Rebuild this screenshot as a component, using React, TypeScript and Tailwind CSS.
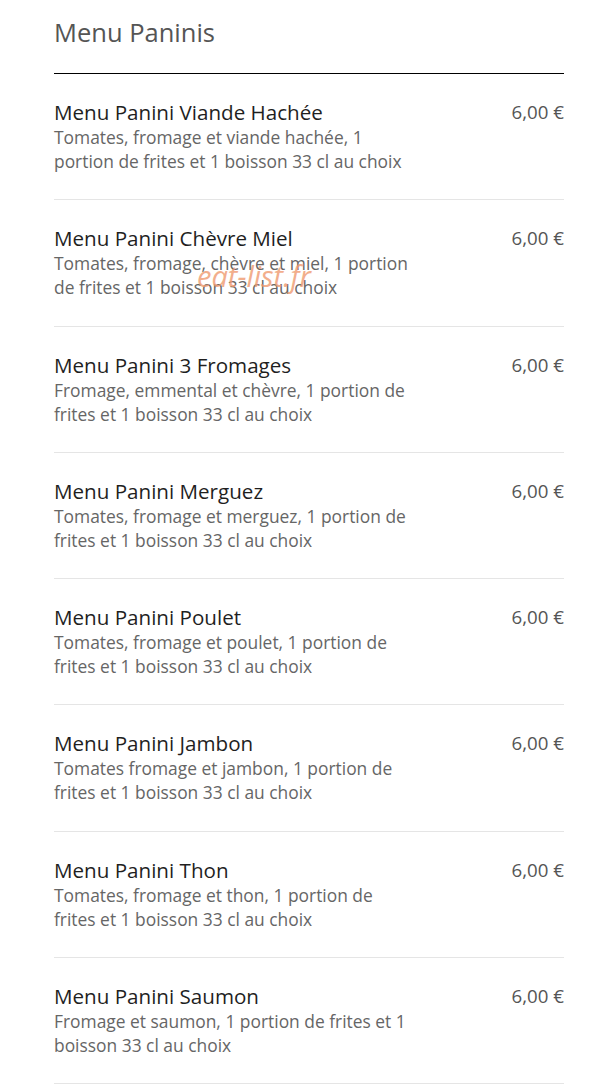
const items = [
  { name: 'Menu Panini Viande Hachée', desc: 'Tomates, fromage et viande hachée, 1 portion de frites et 1 boisson 33 cl au choix' },
  { name: 'Menu Panini Chèvre Miel', desc: 'Tomates, fromage, chèvre et miel, 1 portion de frites et 1 boisson 33 cl au choix' },
  { name: 'Menu Panini 3 Fromages', desc: 'Fromage, emmental et chèvre, 1 portion de frites et 1 boisson 33 cl au choix' },
  { name: 'Menu Panini Merguez', desc: 'Tomates, fromage et merguez, 1 portion de frites et 1 boisson 33 cl au choix' },
  { name: 'Menu Panini Poulet', desc: 'Tomates, fromage et poulet, 1 portion de frites et 1 boisson 33 cl au choix' },
  { name: 'Menu Panini Jambon', desc: 'Tomates fromage et jambon, 1 portion de frites et 1 boisson 33 cl au choix' },
  { name: 'Menu Panini Thon', desc: 'Tomates, fromage et thon, 1 portion de frites et 1 boisson 33 cl au choix' },
  { name: 'Menu Panini Saumon', desc: 'Fromage et saumon, 1 portion de frites et 1 boisson 33 cl au choix' },
];

const App = () => (
  <div className="relative bg-white min-h-[1085px] font-['Open_Sans',sans-serif]">
    <div className="pl-[54px] pr-[49px]">
      <h1 className="pt-[16px] pb-[25px] text-[25.5px] leading-[32px] text-[#555555]">Menu Paninis</h1>
      <div className="border-t border-black">
        {items.map((item) => (
          <div key={item.name} className="flex justify-between pt-[25px] pb-[26.3px] border-b border-[#e5e5e5]">
            <div className="w-[362px]">
              <div className="text-[20.6px] leading-[26px] text-[#1f1f1f]">{item.name}</div>
              <div className="text-[17.4px] leading-[24px] text-[#666666]">{item.desc}</div>
            </div>
            <div className="text-[18.7px] leading-[26px] text-[#555555]">6,00 €</div>
          </div>
        ))}
      </div>
    </div>
    <div className="absolute left-[197px] top-[254px] text-[29px] italic text-[#f09a70] opacity-80 pointer-events-none">
      eat-list.fr
    </div>
  </div>
);

export default App;
